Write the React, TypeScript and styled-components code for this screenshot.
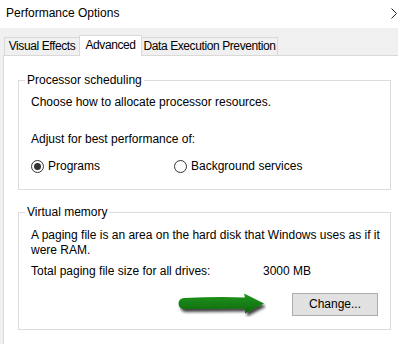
import React from 'react';
import styled, { createGlobalStyle } from 'styled-components';

const GlobalStyle = createGlobalStyle`
  html, body {
    margin: 0;
    padding: 0;
    background: #ffffff;
  }
  body {
    font-family: 'Liberation Sans', Arial, sans-serif;
    font-size: 12px;
    line-height: 15px;
    color: #000;
  }
`;

const Window = styled.div`
  width: 398px;
  height: 344px;
  overflow: hidden;
  display: flex;
  flex-direction: column;
  background: #ffffff;
`;

const TitleBar = styled.div`
  height: 28px;
  flex: none;
  display: flex;
  align-items: center;
  justify-content: space-between;
  padding: 0 0 2px 6px;
  box-sizing: border-box;
  background: #ffffff;
`;

const Title = styled.span`
  font-size: 12px;
`;

const Body = styled.div`
  flex: 1;
  display: flex;
  flex-direction: column;
  background: #f0f0f0;
  padding: 7px 0 0 3px;
`;

const TabRow = styled.div`
  display: flex;
  align-items: flex-end;
  height: 20px;
  padding-left: 1px;
  position: relative;
  z-index: 1;
`;

const Tab = styled.div<{ $active?: boolean; $width: number }>`
  box-sizing: border-box;
  width: ${({ $width }) => $width}px;
  height: ${({ $active }) => ($active ? '21px' : '18px')};
  margin-bottom: ${({ $active }) => ($active ? '-1px' : '0')};
  margin-left: -1px;
  border: 1px solid #d9d9d9;
  border-bottom: none;
  background: ${({ $active }) => ($active ? '#ffffff' : '#f0f0f0')};
  display: flex;
  align-items: center;
  justify-content: center;
  padding-bottom: ${({ $active }) => ($active ? '2px' : '0')};
  letter-spacing: -0.4px;
  white-space: nowrap;
  &:first-child {
    margin-left: 0;
  }
`;

const Panel = styled.div`
  flex: 1;
  background: #ffffff;
  border-top: 1px solid #d9d9d9;
  border-left: 1px solid #d9d9d9;
  padding: 17px 7px 0 14px;
`;

const GroupBox = styled.fieldset<{ $gap?: number; $top?: number }>`
  margin: ${({ $gap }) => $gap ?? 0}px 0 0 0;
  padding: ${({ $top }) => $top ?? 7}px 2px 0 6px;
  border: 1px solid #dcdcdc;
  min-width: 0;
`;

const Legend = styled.legend`
  padding: 0 2px;
  line-height: 15px;
`;

const GroupContent = styled.div<{ $bottom: number }>`
  padding: 0 0 ${({ $bottom }) => $bottom}px 6px;
`;

const Line = styled.div<{ $gap?: number }>`
  margin-top: ${({ $gap }) => $gap ?? 0}px;
`;

const RadioRow = styled.div`
  display: flex;
  margin-top: 12px;
`;

const RadioItem = styled.label<{ $width?: number }>`
  display: flex;
  align-items: center;
  gap: 4px;
  width: ${({ $width }) => ($width ? `${$width}px` : 'auto')};
`;

const RadioCircle = styled.span<{ $checked?: boolean }>`
  box-sizing: border-box;
  width: 13px;
  height: 13px;
  border-radius: 50%;
  border: 1px solid #333333;
  display: flex;
  align-items: center;
  justify-content: center;
  &::after {
    content: '';
    width: 7px;
    height: 7px;
    border-radius: 50%;
    background: #333333;
    display: ${({ $checked }) => ($checked ? 'block' : 'none')};
  }
`;

const SizeRow = styled.div`
  display: flex;
  margin-top: 6px;
`;

const SizeLabel = styled.span`
  width: 232px;
`;

const ButtonRow = styled.div`
  display: flex;
  justify-content: flex-end;
  align-items: center;
  gap: 26px;
  margin-top: 12px;
  padding-right: 10px;
`;

const Button = styled.button`
  width: 86px;
  height: 23px;
  box-sizing: border-box;
  background: #e1e1e1;
  border: 1px solid #adadad;
  font: inherit;
  color: #000;
  padding: 0;
`;

const Chevron = () => (
  <svg width="6" height="11" viewBox="0 0 6 11" style={{ marginRight: 1 }}>
    <polyline points="0.5,0.5 5.5,5.5 0.5,10.5" fill="none" stroke="#222" strokeWidth="1" />
  </svg>
);

const GreenArrow = () => (
  <svg width="88" height="26" viewBox="0 0 88 26">
    <defs>
      <linearGradient id="arrowFill" x1="0" y1="0" x2="0" y2="1">
        <stop offset="0" stopColor="#22961c" />
        <stop offset="1" stopColor="#0a680b" />
      </linearGradient>
      <filter id="arrowShadow" x="-10%" y="-30%" width="130%" height="180%">
        <feDropShadow dx="2" dy="3" stdDeviation="1.5" floodColor="#000" floodOpacity="0.75" />
      </filter>
    </defs>
    <path
      d="M6 7 Q40 5.5 67 6.5 L66 2.5 L86 12.5 L67 22.5 L67 17.5 Q40 17.5 6 18 A5.5 5.5 0 0 1 6 7 Z"
      fill="url(#arrowFill)"
      filter="url(#arrowShadow)"
    />
  </svg>
);

export default function App() {
  return (
    <>
      <GlobalStyle />
      <Window>
        <TitleBar>
          <Title>Performance Options</Title>
          <Chevron />
        </TitleBar>
        <Body>
          <TabRow>
            <Tab $width={76}>Visual Effects</Tab>
            <Tab $width={63} $active>
              Advanced
            </Tab>
            <Tab $width={137}>Data Execution Prevention</Tab>
          </TabRow>
          <Panel>
            <GroupBox>
              <Legend>Processor scheduling</Legend>
              <GroupContent $bottom={15}>
                <Line>Choose how to allocate processor resources.</Line>
                <Line $gap={22}>Adjust for best performance of:</Line>
                <RadioRow>
                  <RadioItem $width={143}>
                    <RadioCircle $checked />
                    Programs
                  </RadioItem>
                  <RadioItem>
                    <RadioCircle />
                    Background services
                  </RadioItem>
                </RadioRow>
              </GroupContent>
            </GroupBox>
            <GroupBox $gap={15} $top={8}>
              <Legend>Virtual memory</Legend>
              <GroupContent $bottom={12}>
                <Line>A paging file is an area on the hard disk that Windows uses as if it were RAM.</Line>
                <SizeRow>
                  <SizeLabel>Total paging file size for all drives:</SizeLabel>
                  <span>3000 MB</span>
                </SizeRow>
                <ButtonRow>
                  <GreenArrow />
                  <Button>Change...</Button>
                </ButtonRow>
              </GroupContent>
            </GroupBox>
          </Panel>
        </Body>
      </Window>
    </>
  );
}
